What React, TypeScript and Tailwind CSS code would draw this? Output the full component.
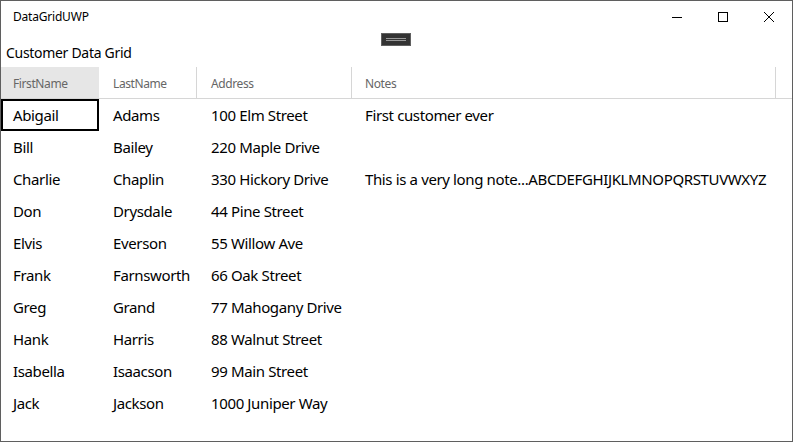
const ROWS = [
  ["Abigail", "Adams", "100 Elm Street", "First customer ever"],
  ["Bill", "Bailey", "220 Maple Drive", ""],
  ["Charlie", "Chaplin", "330 Hickory Drive", "This is a very long note...ABCDEFGHIJKLMNOPQRSTUVWXYZ"],
  ["Don", "Drysdale", "44 Pine Street", ""],
  ["Elvis", "Everson", "55 Willow Ave", ""],
  ["Frank", "Farnsworth", "66 Oak Street", ""],
  ["Greg", "Grand", "77 Mahogany Drive", ""],
  ["Hank", "Harris", "88 Walnut Street", ""],
  ["Isabella", "Isaacson", "99 Main Street", ""],
  ["Jack", "Jackson", "1000 Juniper Way", ""],
];

const COLS = ["w-[98px]", "w-[98px]", "w-[155px]", "w-[424px]"];
const PADS = ["pl-[12px]", "pl-[14px]", "pl-[14px]", "pl-[13px]"];
const HEADERS = ["FirstName", "LastName", "Address", "Notes"];

export default function App() {
  return (
    <div className="w-[793px] h-[442px] bg-white border border-[#5f5f5f] flex flex-col overflow-hidden text-black font-['Segoe_UI','Noto_Sans',sans-serif]">
      {/* Title bar */}
      <div className="h-[31px] flex items-center shrink-0">
        <div className="pl-[12px] text-[12px] tracking-[-0.2px] flex-1">DataGridUWP</div>
        <div className="flex h-full">
          <div className="w-[46px] flex items-center justify-center">
            <svg width="10" height="10" viewBox="0 0 10 10"><path d="M0 5.5h10" stroke="#000" strokeWidth="1" /></svg>
          </div>
          <div className="w-[46px] flex items-center justify-center">
            <svg width="10" height="10" viewBox="0 0 10 10"><rect x="0.5" y="0.5" width="9" height="9" fill="none" stroke="#000" strokeWidth="1" /></svg>
          </div>
          <div className="w-[46px] flex items-center justify-center">
            <svg width="10" height="10" viewBox="0 0 10 10"><path d="M0 0L10 10M10 0L0 10" stroke="#000" strokeWidth="1" /></svg>
          </div>
        </div>
      </div>

      {/* Drag handle */}
      <div className="h-0 relative">
        <div className="absolute left-[380px] top-[1px] w-[30px] h-[13px] bg-[#333] border border-[#606060] flex flex-col justify-center items-center gap-[1px]">
          <div className="w-[20px] h-px bg-[#999]" />
          <div className="w-[20px] h-px bg-[#999]" />
        </div>
      </div>

      <div className="h-[35px] pt-[11px] pl-[5px] text-[14px] leading-[20px] tracking-[-0.3px] shrink-0">Customer Data Grid</div>

      {/* Header */}
      <div className="flex h-[32px] border-b border-[#d6d6d6] shrink-0 text-[12px] tracking-[-0.4px] text-[#666]">
        {HEADERS.map((h, i) => (
          <div
            key={h}
            className={`${COLS[i]} flex items-center pt-[3px] ${PADS[i]} ${i === 0 ? "bg-[#e6e6e6]" : "border-r border-[#d6d6d6]"}`}
          >
            {h}
          </div>
        ))}
      </div>

      {/* Rows */}
      <div className="flex flex-col text-[15px] tracking-[-0.37px]">
        {ROWS.map((r, ri) => (
          <div key={ri} className="flex h-[32px]">
            {r.map((c, ci) => (
              <div
                key={ci}
                className={`${COLS[ci]} flex items-center whitespace-nowrap ${
                  ri === 0 && ci === 0 ? "border-2 border-black pl-[10px]" : PADS[ci]
                }`}
              >
                {c}
              </div>
            ))}
          </div>
        ))}
      </div>
    </div>
  );
}
